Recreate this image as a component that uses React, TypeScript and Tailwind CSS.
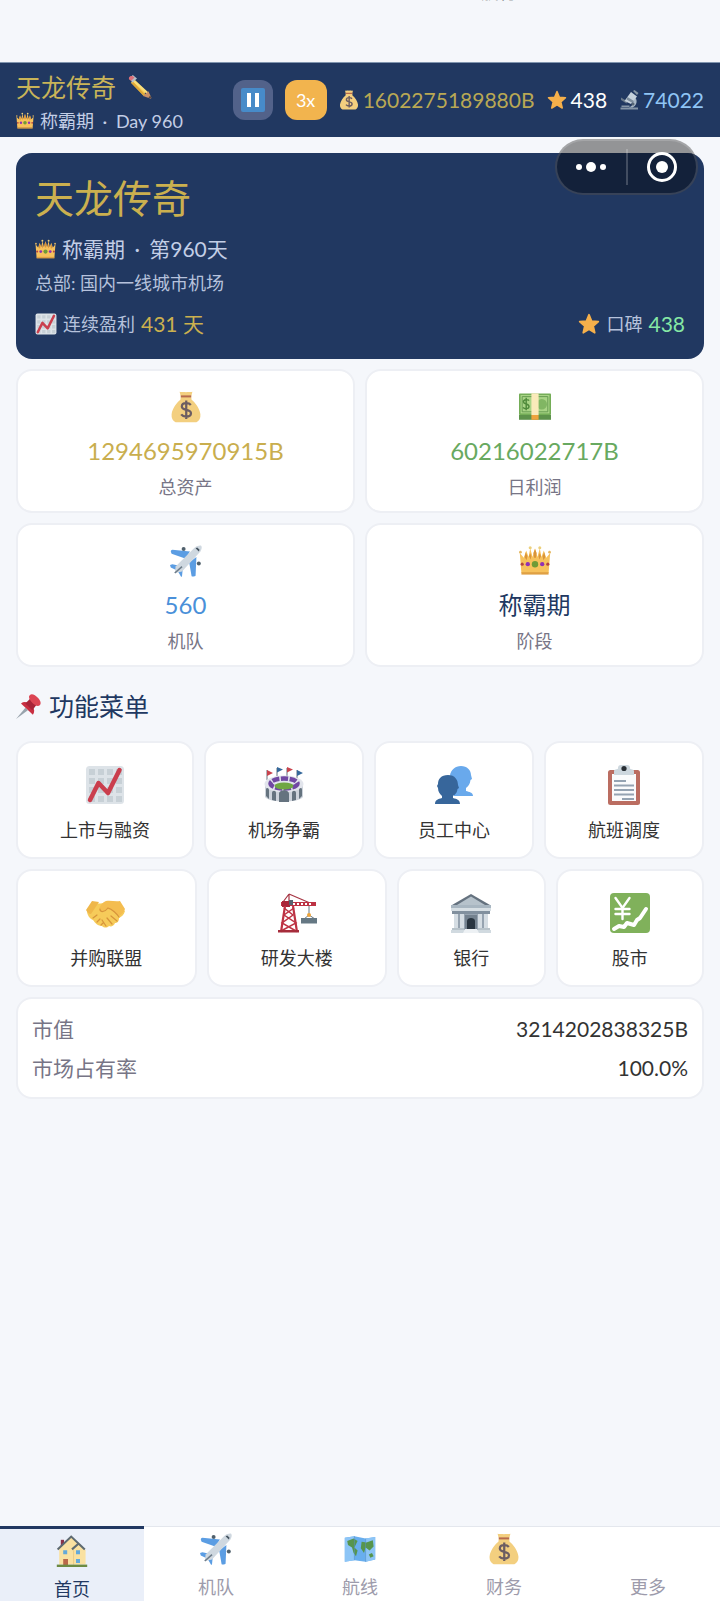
import type { ReactNode } from 'react';

type IconProps = { className?: string };

function Svg({ className = '', children }: { className?: string; children: ReactNode }) {
  return (
    <svg viewBox="0 0 40 40" className={`shrink-0 ${className}`} aria-hidden="true">
      {children}
    </svg>
  );
}

function CrownIcon({ className }: IconProps) {
  return (
    <Svg className={className}>
      <path d="m3 35-2-25 5 6 3-9 3 8 2-11 3 11 3-11 3 11 3-11 2 11 3-8 3 9 5-6-2 25z" fill="#f7c25c" />
      <path d="M20 5l2 5-.8 6h-2.400L18 10zM8.500 9l2 5-1 5-2.500-4zM31.500 9l1.500 6-2.500 4-1-5zM14 10l1.500 4-1 4-2-4zM26 10l1.500 4-2 4-1-4z" fill="#d9943a" />
      <path d="M3 34h34v3H3z" fill="#dfa044" />
      <circle cx="14" cy="3.500" r="1.900" fill="#ecd07c" />
      <circle cx="26" cy="3.500" r="1.900" fill="#ecd07c" />
      <circle cx="1.800" cy="9" r="1.700" fill="#e5b862" />
      <circle cx="38.200" cy="9" r="1.700" fill="#e5b862" />
      <circle cx="20" cy="24" r="4" fill="#6f9b36" />
      <circle cx="11" cy="24" r="2.700" fill="#9131b5" />
      <circle cx="29" cy="24" r="2.700" fill="#9131b5" />
      <circle cx="4" cy="24" r="2" fill="#b6473e" />
      <circle cx="36" cy="24" r="2" fill="#b6473e" />
    </Svg>
  );
}

function MoneyBagIcon({ className }: IconProps) {
  return (
    <Svg className={className}>
      <path d="M12 1c3 1 5-.5 8 .5 3-1 5 .5 8-.5l-1.500 6 .5 4c5 4 10 11 11 18 .5 5-1.500 8-5 10H7c-3.500-2-5.500-5-5-10 1-7 6-14 11-18l.5-4z" fill="#f3cf7f" />
      <path d="M13.500 5.500h13v2.500h-13z" fill="#b76a4d" />
      <path d="M26 17.500c-1.200-1.500-3.400-2.200-5.700-2.200-3.200 0-5.500 1.600-5.500 4.200 0 5.600 11.400 2.700 11.400 8.300 0 2.700-2.600 4.200-5.900 4.200-2.600 0-5-.9-6.300-2.700M20.300 12v23" fill="none" stroke="#6c5d62" strokeWidth="2.800" />
    </Svg>
  );
}

function BanknoteIcon({ className }: IconProps) {
  return (
    <Svg className={className}>
      <path d="M0 30h40v6H0z" fill="#5d924b" />
      <rect y="3" width="40" height="27" rx="1" fill="#74ad57" />
      <rect x="2" y="5" width="36" height="23" fill="#a9d486" />
      <path d="M4 7h32v19H4z" fill="none" stroke="#659b50" strokeWidth="1.200" />
      <circle cx="28.500" cy="16.500" r="6.500" fill="#81b663" />
      <path d="M12.500 12c-1.500-2-7-1.500-7 1.500 0 3.500 7 2 7 6 0 3-5.500 3.500-7.500 1M9 8.500v15.500" fill="none" stroke="#4f8a3b" strokeWidth="1.800" />
      <path d="M15.500 3h9v27h-9z" fill="#faeaba" />
      <path d="M15.500 30h9v6h-9z" fill="#eda33d" />
    </Svg>
  );
}

function PlaneIcon({ className }: IconProps) {
  return (
    <Svg className={className}>
      <circle cx="17" cy="5" r="2.500" fill="#50606c" />
      <circle cx="36" cy="23" r="2.500" fill="#50606c" />
      <path d="M1 8c0-1 1-2 2-2l22 2-6 9L2 11zM33 15l-1 23c0 1-4 2-5 1l-3-17zM0 25l3-1 9 2-3 6-8-4zM15 39l1-10-6 4 4 7z" fill="#5b9de3" />
      <path d="M39 1c1 1 1 4-1 7L15 33 6 35l1-8L31 3c3-2 7-3 8-2z" fill="#cfd8e0" />
      <path d="M15 27 6 35" stroke="#6d7c89" strokeWidth="2" />
      <path d="m32 4 4 4 1-2-3-3z" fill="#44525e" />
    </Svg>
  );
}

function PencilIcon({ className }: IconProps) {
  return (
    <Svg className={className}>
      <path d="m10 7 20 20-4 7L5 13z" fill="#f5cd58" />
      <path d="m10 7 25 23-3 2L7 10z" fill="#fbdf7a" />
      <path d="m5 13 3-2 21 22-3 2z" fill="#e0a838" />
      <path d="m34 27 5 11c0 1-1 2-2 1l-12-4z" fill="#c88f68" />
      <path d="m37 34 2 4-1 1-4-1z" fill="#5c4a44" />
      <path d="M8 0 3 5l4 8 8-7z" fill="#b6bfc7" />
      <path d="M2 7C0 4 4 0 8 2l3 2-6 6z" fill="#dc6f79" />
    </Svg>
  );
}

function StarIcon({ className }: IconProps) {
  return (
    <Svg className={className}>
      <path d="M20 3l4.800 11.500L37 15.500l-9.300 8.200L30.500 36 20 29.500 9.500 36l2.800-12.300L3 15.500l12.200-1z" fill="#f6b04b" stroke="#f6b04b" strokeWidth="3" strokeLinejoin="round" />
    </Svg>
  );
}

function MicroscopeIcon({ className }: IconProps) {
  return (
    <Svg className={className}>
      <path d="M3 35h35v4H3zM5 31h16v3H5z" fill="#8696a8" />
      <path d="M33 16c5 7 1 16-6 19h-7c8-4 10-9 7-15z" fill="#a9b8c6" />
      <path d="m4 15 13 8-2 4-11-7z" fill="#69798a" />
      <path d="m24 4 12 9-12 15-13-6z" fill="#c5d1dc" />
      <path d="m17 14 13 8-3 4-12-7z" fill="#7d8d9d" />
      <path d="m28 2 3-2 8 6-3 4z" fill="#8595a4" />
      <circle cx="28" cy="28" r="3" fill="#566575" />
    </Svg>
  );
}

function ChartIcon({ className }: IconProps) {
  return (
    <Svg className={className}>
      <rect x="1" y="1" width="38" height="38" rx="3.500" fill="#dde3e8" />
      <path d="M4 4h6v6H4zM13 4h6v6h-6zM22 4h6v6h-6zM31 4h6v6h-6zM4 13h6v6H4zM13 13h6v6h-6zM22 13h6v6h-6zM31 13h6v6h-6zM4 22h6v6H4zM13 22h6v6h-6zM22 22h6v6h-6zM31 22h6v6h-6zM4 31h6v6H4zM13 31h6v6h-6zM22 31h6v6h-6zM31 31h6v6h-6z" fill="#c7d0d6" />
      <path d="m5 35 8.500-17L23 28 34.500 5" fill="none" stroke="#ca3e4d" strokeWidth="4.500" strokeLinecap="round" strokeLinejoin="round" />
    </Svg>
  );
}

function PinIcon({ className }: IconProps) {
  return (
    <Svg className={className}>
      <path d="M15 22 0 40l19-14z" fill="#98a3ac" />
      <path d="M8 15c4-3 8-3 12 0l6 5c4 4 4 9 1 13z" fill="#c92f41" />
      <path d="m24 6 10 10-8 10-11-11z" fill="#a82438" />
      <path d="M22 2c3-4 9 0 13 4s6 9 3 12-8 0-12-4-7-9-4-12z" fill="#dc4553" />
    </Svg>
  );
}

function StadiumIcon({ className }: IconProps) {
  return (
    <Svg className={className}>
      <path d="M3 15V5M13 11V3M23 11V3M33 15V5" stroke="#65717c" strokeWidth="1" />
      <path d="m3 5 6 3-6 3zM23 2l6 2.500-6 3z" fill="#c9434d" />
      <path d="m13 2 6 2.500-6 3zM33 5l6 3-6 3z" fill="#35689b" />
      <path d="M1 18h38v14c-4 6-34 6-38 0z" fill="#cdd3db" />
      <ellipse cx="20" cy="19" rx="19.500" ry="8.500" fill="#e2e5ec" />
      <ellipse cx="20" cy="18.500" rx="13.500" ry="5" fill="none" stroke="#7148a3" strokeWidth="4.500" strokeDasharray="7 1.500" />
      <ellipse cx="20" cy="21" rx="9.500" ry="3.400" fill="#70a744" />
      <path d="M15 37v-8c0-5 10-5 10 0v8zM8 35v-7c0-3 4-3 4 0v8zM28 36v-8c0-3 4-3 4 0v7zM2 31v-6c0-3 3-2 3 0v9zM35 34v-9c0-2 3-3 3 0v6z" fill="#65737f" />
    </Svg>
  );
}

function PeopleIcon({ className }: IconProps) {
  return (
    <Svg className={className}>
      <path d="M27 1c6 0 10 4 10 9l1 4-1.500 1c-.5 4-2 6-4.500 8v3c3 1 7 1 7 5H20V16l-4-6c1-5 5-9 11-9z" fill="#69a9ec" />
      <path d="M14 10c7 0 10 5 10 10l1 3-1.500 1c-.5 4-2 5-4.500 7v2c4 1 7 2 7 6H1c0-4 3-5 7-6v-2c-2-2-4-4-4-8l-1-2 1-2c0-5 3-9 10-9z" fill="#37669b" />
    </Svg>
  );
}

function ClipboardIcon({ className }: IconProps) {
  return (
    <Svg className={className}>
      <rect x="4" y="5" width="32" height="35" rx="2.500" fill="#bb6d61" />
      <path d="M8 9h24v27H8z" fill="#fafbfc" />
      <path d="M10 10V6c0-2 3-1 5-3h10c2 2 5 1 5 3v4z" fill="#cdd7de" />
      <rect x="14" width="12" height="6" rx="3" fill="#cdd7de" />
      <circle cx="20" cy="3.500" r="2.600" fill="#292f35" />
      <path d="M10 16h12M10 20.500h20M10 25h20M10 29.500h20M18 34h12" stroke="#95a3b2" strokeWidth="2" />
    </Svg>
  );
}

function HandshakeIcon({ className }: IconProps) {
  return (
    <Svg className={className}>
      <path d="M6 9c5 2 9 2 13 0l12 2 8 7c-1 4-4 6-6 7 0 4-2 5-4 5-1 3-4 4-6 3-2 2-5 2-7 0-4 0-7-3-9-6-3-1-6-5-6-9z" fill="#f6cb5a" />
      <path d="m6 8-6 9c1 2 3 4 5 4l8-12z" fill="#efb74a" />
      <path d="M34 8c-5 1-9-1-14 0-3 1-6 5-7 8 0 4 5 3 8 0 4 0 9 4 12 7 2-1 5-4 6-7z" fill="#f4bd50" />
      <path d="M14 16c0 4 5 3 8-1 4 1 9 6 11 9M25 23l6 5M21 25l5 6M16 27l4 6M7 25l4-3M11 29l3-3M15 32l2-2" fill="none" stroke="#d7943b" strokeWidth="1.200" strokeLinecap="round" />
    </Svg>
  );
}

function CraneIcon({ className }: IconProps) {
  return (
    <Svg className={className}>
      <path d="M12 1 6 9M12 1l21 9M12 1v9" fill="none" stroke="#a63543" strokeWidth="1.200" />
      <path d="M4 9h35v4H4z" fill="#bd3344" />
      <path d="M16 10h2v2h-2zM20 10h2v2h-2zM24 10h2v2h-2zM28 10h2v2h-2zM32 10h2v2h-2z" fill="#fff" />
      <path d="M5 8h8v6H5z" fill="#aa2639" />
      <path d="M12 7h4v5h-4z" fill="#56636f" />
      <path d="m8 13-4 26M16 13l4 26" stroke="#bd3344" strokeWidth="2.200" />
      <path d="m7 15 9 7-11 8 14 8M17 15l-10 7 12 8-15 8" fill="none" stroke="#bd3344" strokeWidth="1.500" />
      <path d="M1 37h21v2.500H1z" fill="#a62c3b" />
      <path d="M32 13v9l-5 4M32 22l6 4" fill="none" stroke="#6b7780" />
      <circle cx="32" cy="22" r="2" fill="#eea43c" />
      <path d="M24 25h16v5.500H24z" fill="#657884" />
    </Svg>
  );
}

function BankIcon({ className }: IconProps) {
  return (
    <Svg className={className}>
      <path d="M3 19h34v18H3z" fill="#96a3b0" />
      <path d="m20 1 19 11H1z" fill="#65727f" />
      <path d="m20 3.500 14 8.500H6z" fill="#b6c2cb" />
      <path d="M0 12h40v4H0z" fill="#a8b6c1" />
      <path d="M0 15h40v3H0z" fill="#d7dfe4" />
      <path d="M1 18h38v3H1z" fill="#81909e" />
      <path d="M3 21h4v15H3zM9 21h4v15H9zM27 21h4v15h-4zM33 21h4v15h-4z" fill="#d5dde3" />
      <path d="M14 22h12v15H14z" fill="#74828f" />
      <path d="M16 37V28c0-4 8-4 8 0v9z" fill="#293540" />
      <path d="M1 35h12v2H1zM27 35h12v2H27z" fill="#b8c3ca" />
      <path d="M0 37h40v3H0z" fill="#d1dae0" />
      <path d="M14 36h12l2 4H12z" fill="#edf1f4" />
    </Svg>
  );
}

function StockIcon({ className }: IconProps) {
  return (
    <Svg className={className}>
      <rect width="40" height="40" rx="4" fill="#80b15b" />
      <path d="m5.500 5 7 10 7-10M12.500 15v11M5.500 16h14M5.500 21h14" fill="none" stroke="#fff" strokeWidth="2.400" strokeLinecap="round" />
      <path d="m4 36 5-3 5 1 3-4 7 2 3-5 3-2 6-9" fill="none" stroke="#fff" strokeWidth="4" strokeLinecap="round" strokeLinejoin="round" />
    </Svg>
  );
}

function HouseIcon({ className }: IconProps) {
  return (
    <Svg className={className}>
      <path d="M6 6h4v9H6z" fill="#8b3349" />
      <path d="M4 17 19 3l9 7 9 9v18H4z" fill="#fae1a1" />
      <path d="M22 19v18" stroke="#e8c47d" />
      <path d="M2 18 19 2l17 16M20 18l8-7" fill="none" stroke="#5e6a71" strokeWidth="2.600" />
      <path d="M9 19h5v5H9zM25 19h5v5h-5zM25 30h5v5h-5z" fill="#64a9da" />
      <path d="M9 30h6v8H9z" fill="#b96849" />
      <path d="M1 37h38v3H1z" fill="#6d8b43" />
    </Svg>
  );
}

function MapIcon({ className }: IconProps) {
  return (
    <Svg className={className}>
      <path d="m1 6 12-2 14 3 12-2v28l-12 3-14-2-12 2z" fill="#68aeee" />
      <path d="m1 6 12-2v30L1 36zM27 7l12-2v28l-12 3z" fill="#8dc5f6" />
      <path d="m4 10 8-3 5 3-4 8 4 4-2 7-3-4-2-7-5-3zM22 11l6 1 8-3 1 8-5 5-5-4-2 7-4-6zM31 27l4-2 2 4-4 2z" fill="#57954d" />
      <path d="M13 4v30M27 7v29" stroke="#5590c7" strokeWidth=".7" />
    </Svg>
  );
}

const stats = [
  { label: '总资产', value: '1294695970915B', color: 'text-[#c9ae4e]', Icon: MoneyBagIcon },
  { label: '日利润', value: '60216022717B', color: 'text-[#68a960]', Icon: BanknoteIcon },
  { label: '机队', value: '560', color: 'text-[#4a90d9]', Icon: PlaneIcon },
  { label: '阶段', value: '称霸期', color: 'text-[#213861]', Icon: CrownIcon },
];

const menuRows = [
  [
    { label: '上市与融资', Icon: ChartIcon },
    { label: '机场争霸', Icon: StadiumIcon },
    { label: '员工中心', Icon: PeopleIcon },
    { label: '航班调度', Icon: ClipboardIcon },
  ],
  [
    { label: '并购联盟', Icon: HandshakeIcon },
    { label: '研发大楼', Icon: CraneIcon },
    { label: '银行', Icon: BankIcon },
    { label: '股市', Icon: StockIcon },
  ],
];

const tabs = [
  { label: '首页', Icon: HouseIcon, active: true },
  { label: '机队', Icon: PlaneIcon },
  { label: '航线', Icon: MapIcon },
  { label: '财务', Icon: MoneyBagIcon },
  { label: '更多', Icon: null },
];

function Dot() {
  return <span className="mx-1">·</span>;
}

function Header() {
  return (
    <header className="flex h-[75px] items-center justify-between border-t border-[#8195af] bg-[#213861] px-4">
      <div className="pt-1.5">
        <div className="flex items-center gap-3 text-[25px] leading-9 text-[#c9b458]">
          天龙传奇
          <button type="button" aria-label="改名">
            <PencilIcon className="size-6" />
          </button>
        </div>
        <div className="flex items-center gap-1.5 text-[18px] leading-8 text-[#c3cee6]">
          <CrownIcon className="size-[18px]" />
          <span>
            称霸期 <Dot /> Day 960
          </span>
        </div>
      </div>
      <div className="flex items-center gap-3 text-[21px] leading-8">
        <button type="button" aria-label="暂停" className="flex size-10 items-center justify-center rounded-xl bg-[#52628a]">
          <span className="flex size-6 items-center justify-center gap-1 rounded-xs bg-[#478bc9]">
            <span className="h-3.5 w-1 bg-white" />
            <span className="h-3.5 w-1 bg-white" />
          </span>
        </button>
        <button type="button" className="h-10 w-[42px] rounded-xl bg-[#f2b44e] text-[18px] text-white">
          3x
        </button>
        <span className="flex items-center gap-1 text-[#b9a854]">
          <MoneyBagIcon className="size-5" />
          1602275189880B
        </span>
        <span className="flex items-center gap-1 text-white">
          <StarIcon className="size-5" />
          438
        </span>
        <span className="flex items-center gap-1 text-[#90c5f5]">
          <MicroscopeIcon className="size-5" />
          74022
        </span>
      </div>
    </header>
  );
}

function Capsule() {
  return (
    <div className="absolute -top-3.5 right-1.5 flex h-14 w-[143px] items-center rounded-full border-2 border-white/15 bg-black/40">
      <button type="button" aria-label="更多选项" className="flex flex-1 items-center justify-center gap-1">
        <span className="size-1.5 rounded-full bg-white" />
        <span className="size-2.5 rounded-full bg-white" />
        <span className="size-1.5 rounded-full bg-white" />
      </button>
      <span className="h-9 w-0.5 bg-white/20" />
      <button type="button" aria-label="关闭" className="flex flex-1 items-center justify-center">
        <span className="flex size-[30px] items-center justify-center rounded-full border-3 border-white">
          <span className="size-3 rounded-full bg-white" />
        </span>
      </button>
    </div>
  );
}

function Hero() {
  return (
    <section className="rounded-2xl bg-[#213861] px-[19px] pt-4 pb-[18px] text-[#b6c2dc]">
      <h1 className="mb-1 text-[39px] leading-[58px] text-[#cbb04f]">天龙传奇</h1>
      <div className="flex items-center gap-1.5 text-[21px] leading-9 text-[#c3cee6]">
        <CrownIcon className="size-[21px]" />
        <span>
          称霸期 <Dot /> 第960天
        </span>
      </div>
      <p className="text-[18px] leading-8">总部: 国内一线城市机场</p>
      <div className="mt-2 flex items-center justify-between text-[18px] leading-[34px]">
        <div className="flex items-center gap-1.5">
          <ChartIcon className="size-[22px]" />
          连续盈利
          <span className="text-[21px] text-[#cbb04f]">431 天</span>
        </div>
        <div className="flex items-center gap-1.5">
          <StarIcon className="size-[22px]" />
          口碑
          <span className="text-[21px] text-[#86e8a5]">438</span>
        </div>
      </div>
    </section>
  );
}

export default function App() {
  return (
    <div className="flex min-h-screen flex-col bg-[#f5f7fb] font-['Lato','Noto_Sans_CJK_SC',sans-serif] text-[#333333]">
      {/* Tail of the previous item, scrolled out under the top edge */}
      <div className="flex h-[62px] items-start justify-end overflow-hidden pr-[203px]">
        <span className="-mt-5 text-[18px] leading-6">航行</span>
      </div>
      <Header />

      <main className="flex flex-1 flex-col gap-2.5 p-4">
        <div className="relative">
          <Hero />
          <Capsule />
        </div>

        <section className="grid grid-cols-2 gap-2.5">
          {stats.map(({ label, value, color, Icon }) => (
            <div key={label} className="flex flex-col items-center rounded-2xl border-2 border-[#edeff4] bg-white pt-5 pb-2">
              <Icon className="size-8" />
              <div className={`mt-2 text-[24px] leading-10 ${color}`}>{value}</div>
              <div className="text-[18px] leading-8 text-[#777586]">{label}</div>
            </div>
          ))}
        </section>

        <h2 className="mt-2 mb-1 flex items-center gap-2 text-[25px] leading-[42px] text-[#213861]">
          <PinIcon className="size-[25px]" />
          功能菜单
        </h2>

        {menuRows.map((row, i) => (
          <div key={i} className="flex gap-2.5">
            {row.map(({ label, Icon }) => (
              <button
                key={label}
                type="button"
                className="flex flex-auto flex-col items-center rounded-2xl border-2 border-[#edeff4] bg-white pt-[22px] pb-3"
              >
                <Icon className="size-10" />
                <span className="mt-2.5 text-[18px] leading-[30px]">{label}</span>
              </button>
            ))}
          </div>
        ))}

        <dl className="rounded-2xl border-2 border-[#edeff4] bg-white px-3.5 py-2.5 text-[21px] leading-[39px]">
          <div className="flex justify-between">
            <dt className="text-[#777586]">市值</dt>
            <dd>3214202838325B</dd>
          </div>
          <div className="flex justify-between">
            <dt className="text-[#777586]">市场占有率</dt>
            <dd>100.0%</dd>
          </div>
        </dl>
      </main>

      <nav className="grid grid-cols-5 bg-white">
        {tabs.map(({ label, Icon, active }) => (
          <a
            key={label}
            href="#"
            className={`flex h-[75px] flex-col items-center overflow-hidden pt-1.5 text-[18px] leading-7 ${
              active
                ? 'border-t-3 border-[#213861] bg-[#eaeff9] text-[#213861]'
                : 'border-t border-[#e4e7ed] text-[#9d9bab]'
            }`}
          >
            {Icon ? <Icon className="size-8" /> : <span className="size-8" />}
            <span className="mt-2">{label}</span>
          </a>
        ))}
      </nav>
    </div>
  );
}
